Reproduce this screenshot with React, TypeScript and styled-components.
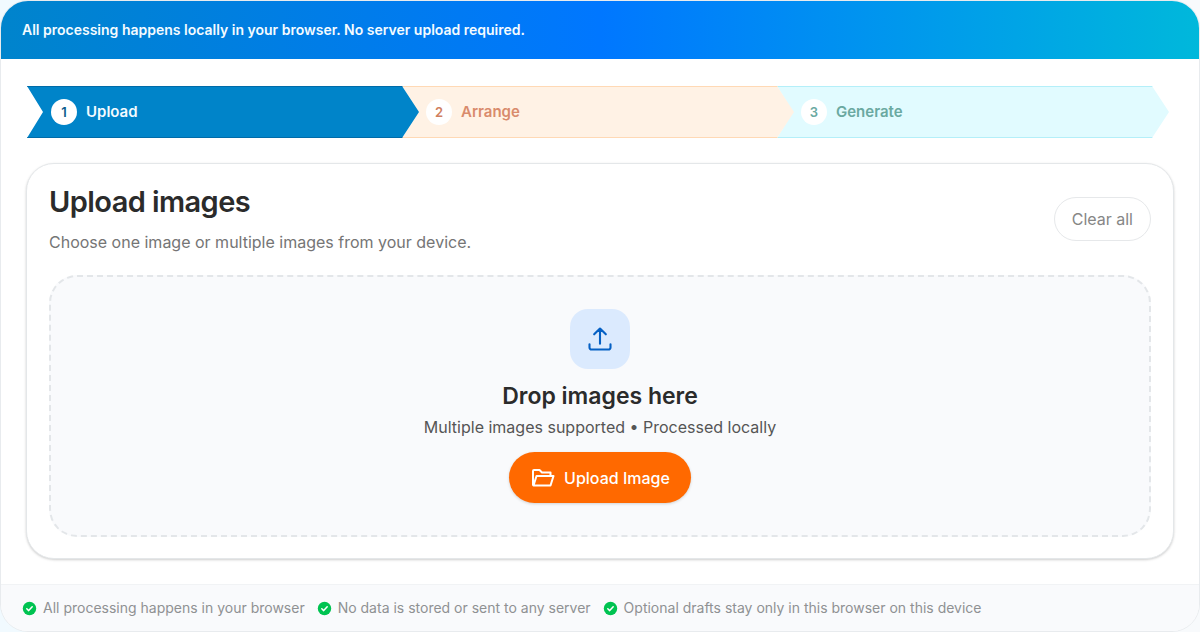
import React from "react";
import styled, { createGlobalStyle } from "styled-components";

const GlobalStyle = createGlobalStyle`
  *, *::before, *::after { box-sizing: border-box; }
  body {
    margin: 0;
    background: linear-gradient(90deg, #f1faff 0%, #f8fafc 100%);
    font-family: Inter, "Liberation Sans", sans-serif;
    color: #2b2b2b;
  }
  h2, h3, p, ul, ol { margin: 0; padding: 0; }
`;

const Shell = styled.main`
  display: flex;
  flex-direction: column;
  border: 1px solid #e8ebee;
  border-radius: 28px;
  background: #fff;
  overflow: hidden;
`;

const Banner = styled.header`
  padding: 19px 21px;
  background: linear-gradient(90deg, #0084cc 0%, #0077ff 50%, #00b8db 100%);
  color: #f4fbff;
  font-size: 14px;
  line-height: 20px;
  font-weight: 600;
`;

const Body = styled.div`
  display: flex;
  flex-direction: column;
  gap: 25px;
  padding: 27px 25px 25px;
`;

const Steps = styled.ol`
  display: flex;
  list-style: none;
  padding: 0 5px 0 1px;
`;

type Tone = "blue" | "orange" | "cyan";

const tones: Record<Tone, { fill: string; edge: string; text: string; num: string; layer: number }> = {
  blue: { fill: "#0084c9", edge: "#006ba8", text: "#f4fbff", num: "#0b5c8c", layer: 3 },
  orange: { fill: "#fff2e5", edge: "#ffd9b5", text: "#d98b6c", num: "#d07f60", layer: 2 },
  cyan: { fill: "#e1fbff", edge: "#b4eff9", text: "#6aa9a1", num: "#6aa9a1", layer: 1 },
};

const Step = styled.li<{ $tone: Tone }>`
  position: relative;
  z-index: ${(p) => tones[p.$tone].layer};
  flex: 1 1 0;
  display: flex;
  align-items: center;
  gap: 9px;
  height: 52px;
  padding: 0 24px;
  border: 1px solid ${(p) => tones[p.$tone].edge};
  border-width: 1px 0;
  background: ${(p) => tones[p.$tone].fill};
  color: ${(p) => tones[p.$tone].text};
  font-size: 15px;
  line-height: 24px;
  font-weight: 600;
  clip-path: polygon(0 0, calc(100% - 17px) 0, 100% 50%, calc(100% - 17px) 100%, 0 100%, 16px 50%);

  & + & {
    margin-left: -17px;
  }
`;

const StepNumber = styled.span<{ $tone: Tone }>`
  display: flex;
  align-items: center;
  justify-content: center;
  width: 26px;
  height: 26px;
  border-radius: 50%;
  background: #fff;
  color: ${(p) => tones[p.$tone].num};
  font-size: 13px;
  line-height: 20px;
`;

const Panel = styled.section`
  display: flex;
  flex-direction: column;
  gap: 21px;
  padding: 20px 22px 21px;
  border: 1px solid #e4e7e9;
  border-radius: 28px;
  background: #fff;
  box-shadow: 0 1px 3px rgba(0, 0, 0, 0.12), 0 1px 2px rgba(0, 0, 0, 0.08);
`;

const PanelHead = styled.div`
  display: flex;
  align-items: center;
  justify-content: space-between;
  gap: 16px;
`;

const Title = styled.h2`
  font-size: 29px;
  line-height: 36px;
  font-weight: 600;
  letter-spacing: -0.02em;
`;

const Lead = styled.p`
  margin-top: 10px;
  color: #757575;
  font-size: 16px;
  line-height: 24px;
`;

const ClearButton = styled.button`
  height: 44px;
  padding: 0 17px;
  border: 1px solid #e6e8ea;
  border-radius: 22px;
  background: #fff;
  color: #868686;
  font: 400 16px/24px Inter, "Liberation Sans", sans-serif;
  cursor: pointer;
`;

const DropZone = styled.div`
  display: flex;
  flex-direction: column;
  align-items: center;
  padding: 32px 24px;
  border: 2px dashed #e3e6e9;
  border-radius: 28px;
  background: #f9fafc;
`;

const IconTile = styled.div`
  display: flex;
  align-items: center;
  justify-content: center;
  width: 60px;
  height: 60px;
  border-radius: 18px;
  background: #dbeafe;
`;

const DropTitle = styled.h3`
  margin-top: 11px;
  font-size: 23px;
  line-height: 32px;
  font-weight: 600;
`;

const DropNote = styled.p`
  margin-top: 3px;
  color: #555;
  font-size: 16px;
  line-height: 24px;
`;

const UploadButton = styled.button`
  display: flex;
  align-items: center;
  gap: 9px;
  height: 51px;
  margin-top: 13px;
  padding: 0 21px;
  border: 0;
  border-radius: 26px;
  background: #ff6900;
  color: #fff;
  font: 500 16px/24px Inter, "Liberation Sans", sans-serif;
  box-shadow: 0 1px 3px rgba(0, 0, 0, 0.16);
  cursor: pointer;
`;

const Footer = styled.footer`
  padding: 13px 21px;
  border-top: 1px solid #f1f3f5;
  background: #f9fafc;
`;

const Notes = styled.ul`
  display: flex;
  flex-wrap: wrap;
  gap: 4px 12px;
  list-style: none;
`;

const Note = styled.li`
  display: flex;
  align-items: center;
  gap: 6px;
  color: #8f9193;
  font-size: 14px;
  line-height: 20px;
`;

const UploadIcon = () => (
  <svg width="28" height="28" viewBox="0 0 24 24" fill="none" stroke="#0560c4" strokeWidth="1.8" strokeLinecap="round" strokeLinejoin="round" aria-hidden="true">
    <path d="M3 16.5v2.700A1.800 1.800 0 0 0 4.800 21h14.400A1.800 1.800 0 0 0 21 19.200V16.5M7 8 12 3l5 5M12 3v13" />
  </svg>
);

const FolderIcon = () => (
  <svg width="25" height="24" viewBox="0 0 25 24" fill="none" stroke="#fff" strokeWidth="2" strokeLinejoin="round" strokeLinecap="round" aria-hidden="true">
    <path d="M3 19V5a1 1 0 0 1 1-1h5.500L12 6.500h8.500V10M3.500 19.500 6.500 10H23.500l-3 9.500z" />
  </svg>
);

const CheckIcon = () => (
  <svg width="15" height="15" viewBox="0 0 15 15" aria-hidden="true">
    <circle cx="7.500" cy="7.500" r="6.700" fill="#00c351" />
    <path d="m4.800 7.800 1.900 1.800 3.500-3.800" fill="none" stroke="#fff" strokeWidth="1.500" strokeLinecap="round" strokeLinejoin="round" />
  </svg>
);

const steps: { label: string; tone: Tone }[] = [
  { label: "Upload", tone: "blue" },
  { label: "Arrange", tone: "orange" },
  { label: "Generate", tone: "cyan" },
];

const notes = [
  "All processing happens in your browser",
  "No data is stored or sent to any server",
  "Optional drafts stay only in this browser on this device",
];

export default function App() {
  return (
    <>
      <GlobalStyle />
      <Shell>
        <Banner>All processing happens locally in your browser. No server upload required.</Banner>
        <Body>
          <Steps>
            {steps.map((s, i) => (
              <Step key={s.label} $tone={s.tone}>
                <StepNumber $tone={s.tone}>{i + 1}</StepNumber>
                {s.label}
              </Step>
            ))}
          </Steps>
          <Panel>
            <PanelHead>
              <div>
                <Title>Upload images</Title>
                <Lead>Choose one image or multiple images from your device.</Lead>
              </div>
              <ClearButton type="button">Clear all</ClearButton>
            </PanelHead>
            <DropZone>
              <IconTile>
                <UploadIcon />
              </IconTile>
              <DropTitle>Drop images here</DropTitle>
              <DropNote>Multiple images supported • Processed locally</DropNote>
              <UploadButton type="button">
                <FolderIcon />
                Upload Image
              </UploadButton>
            </DropZone>
          </Panel>
        </Body>
        <Footer>
          <Notes>
            {notes.map((n) => (
              <Note key={n}>
                <CheckIcon />
                {n}
              </Note>
            ))}
          </Notes>
        </Footer>
      </Shell>
    </>
  );
}
